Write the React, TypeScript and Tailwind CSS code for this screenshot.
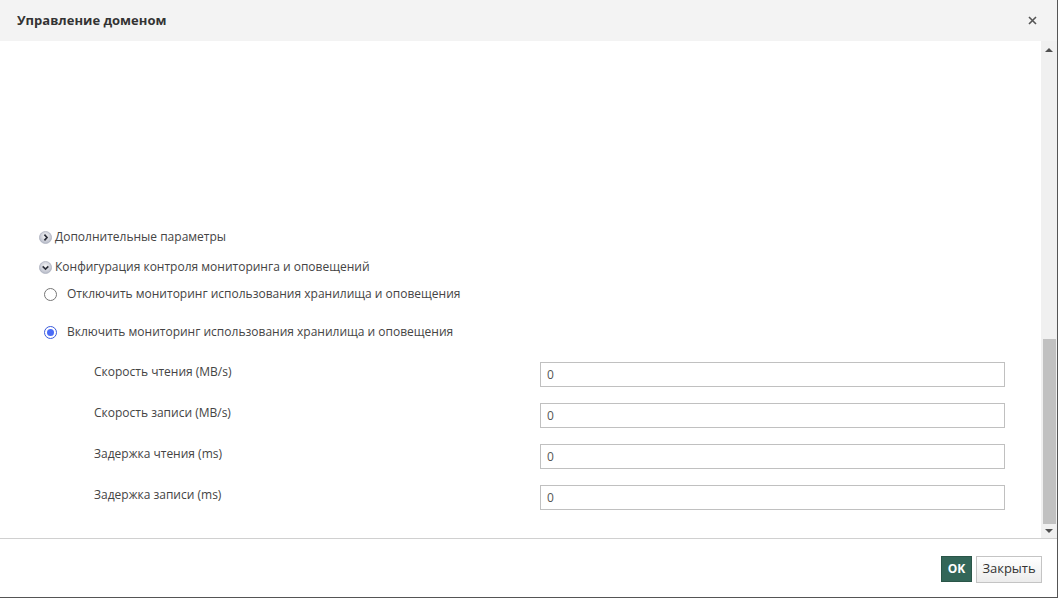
import React from "react";

const font = { fontFamily: '"Open Sans", "Noto Sans", sans-serif' };

function CircleChevron({ dir }: { dir: "right" | "down" }) {
  return (
    <svg width="13" height="13" viewBox="0 0 12 12" className="shrink-0">
      <defs>
        <radialGradient id={`g-${dir}`} cx="50%" cy="40%" r="60%">
          <stop offset="0%" stopColor="#fafafa" />
          <stop offset="100%" stopColor="#b4b8c6" />
        </radialGradient>
      </defs>
      <circle cx="6" cy="6" r="5.6" fill={`url(#g-${dir})`} stroke="#a4a8b6" strokeWidth="0.6" />
      {dir === "right" ? (
        <path d="M5 3.4 L7.4 6 L5 8.6" fill="none" stroke="#2c2f3a" strokeWidth="1.6" />
      ) : (
        <path d="M3.4 5 L6 7.4 L8.6 5" fill="none" stroke="#2c2f3a" strokeWidth="1.6" />
      )}
    </svg>
  );
}

function Radio({ checked }: { checked?: boolean }) {
  return (
    <span
      className={`w-[13px] h-[13px] rounded-full border flex items-center justify-center bg-white shrink-0 ${
        checked ? "border-[#3b5bdb]" : "border-[#767676]"
      }`}
    >
      {checked && <span className="w-[7px] h-[7px] rounded-full bg-[#4a6cf7]" />}
    </span>
  );
}

function Field({ label }: { label: string }) {
  return (
    <div className="flex items-start h-[25px]">
      <div className="w-[540px] shrink-0 pl-[94px] pt-[1px] text-[12px] text-[#444]">{label}</div>
      <div className="w-[465px] shrink-0 h-[25px] border border-[#c0c0c0] bg-white flex items-center px-[6px] text-[12px] text-[#555]">
        0
      </div>
    </div>
  );
}

export default function App() {
  return (
    <div className="w-[1058px] h-[598px] bg-white flex flex-col border-r border-b border-[#555]" style={font}>
      <div className="h-[41px] bg-[#f3f3f3] flex items-center justify-between pl-[17px] pr-[20px] shrink-0">
        <span className="text-[13px] font-bold text-[#333]">Управление доменом</span>
        <svg width="9" height="9" viewBox="0 0 9 9">
          <path d="M1 1 L8 8 M8 1 L1 8" stroke="#555" strokeWidth="1.6" />
        </svg>
      </div>
      <div className="flex h-[498px] shrink-0 overflow-hidden border-b border-[#d0d0d0]">
        <div className="flex-1 flex flex-col pt-[188px] text-[12px] text-[#444]">
          <div className="flex items-center gap-[3px] pl-[39px] h-[16px]">
            <CircleChevron dir="right" />
            <span>Дополнительные параметры</span>
          </div>
          <div className="flex items-center gap-[3px] pl-[39px] h-[16px] mt-[14px]">
            <CircleChevron dir="down" />
            <span>Конфигурация контроля мониторинга и оповещений</span>
          </div>
          <div className="flex items-center gap-[10px] pl-[44px] h-[16px] mt-[11px]">
            <Radio />
            <span>Отключить мониторинг использования хранилища и оповещения</span>
          </div>
          <div className="flex items-center gap-[10px] pl-[44px] h-[16px] mt-[22px]">
            <Radio checked />
            <span>Включить мониторинг использования хранилища и оповещения</span>
          </div>
          <div className="flex flex-col gap-[16px] mt-[22px]">
            <Field label="Скорость чтения (MB/s)" />
            <Field label="Скорость записи (MB/s)" />
            <Field label="Задержка чтения (ms)" />
            <Field label="Задержка записи (ms)" />
          </div>
        </div>
        <div className="w-[16px] bg-[#f0f0f0] flex flex-col items-center shrink-0">
          <div className="h-[17px] flex items-center justify-center">
            <span className="w-0 h-0 border-l-[4px] border-r-[4px] border-b-[4px] border-l-transparent border-r-transparent border-b-[#505050]" />
          </div>
          <div className="flex-1" />
          <div className="w-[13px] h-[185px] bg-[#c1c1c1]" />
          <div className="h-[14px] flex items-center justify-center">
            <span className="w-0 h-0 border-l-[4px] border-r-[4px] border-t-[4px] border-l-transparent border-r-transparent border-t-[#505050]" />
          </div>
        </div>
      </div>
      <div className="flex-1 flex items-center justify-end gap-[4px] pr-[15px] pt-[2px]">
        <button className="h-[26px] w-[31px] bg-[#336658] text-white text-[12px] font-bold border border-[#2a5548]">
          OK
        </button>
        <button className="h-[27px] w-[66px] bg-gradient-to-b from-white to-[#ececec] text-[#333] text-[13px] border border-[#c4c4c4]">
          Закрыть
        </button>
      </div>
    </div>
  );
}
